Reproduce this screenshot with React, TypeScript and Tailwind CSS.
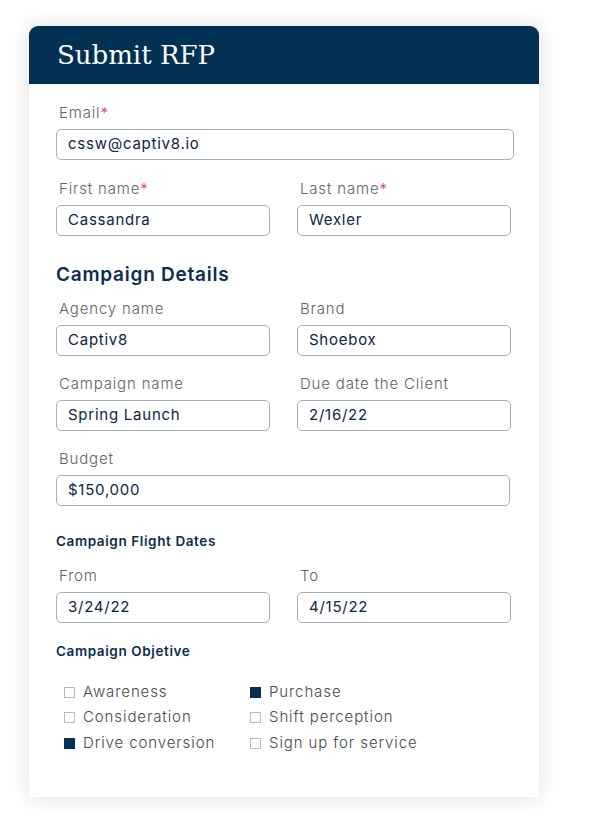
const CHECKS = [
  { label: 'Awareness', on: false },
  { label: 'Purchase', on: true },
  { label: 'Consideration', on: false },
  { label: 'Shift perception', on: false },
  { label: 'Drive conversion', on: true },
  { label: 'Sign up for service', on: false },
]

function Field({
  label,
  value,
  required,
  className = '',
}: {
  label: string
  value: string
  required?: boolean
  className?: string
}) {
  return (
    <div className={className}>
      <div className="pl-[3px] text-[15px] leading-5 font-light tracking-[0.055em] text-[#5f6366]">
        {label}
        {required && <span className="text-[#e0393e]">*</span>}
      </div>
      <div className="mt-[6px] flex h-[31px] items-center rounded-[5px] border border-[#a7afb3] px-[11px] text-[15px] tracking-[0.05em] text-[#0b2545]">
        {value}
      </div>
    </div>
  )
}

export default function App() {
  return (
    <div className="min-h-screen bg-white pt-[26px] pl-[29px] font-['Inter',sans-serif]">
      <div className="w-[510px] overflow-hidden rounded-t-[9px] rounded-b-[4px] bg-white pb-[45px] shadow-[0_0_22px_rgba(0,0,0,0.13)]">
        <div className="flex h-[58px] items-center bg-[#003153] px-[28px]">
          <h1 className="font-['DejaVu_Serif',serif] text-[26px] text-white">Submit RFP</h1>
        </div>

        <div className="px-[27px] pt-[19px]">
          <Field label="Email" value="cssw@captiv8.io" required className="w-[458px]" />

          <div className="mt-[19px] grid grid-cols-[214px_214px] gap-x-[27px]">
            <Field label="First name" value="Cassandra" required />
            <Field label="Last name" value="Wexler" required />
          </div>

          <h2 className="mt-[25px] text-[19px] font-semibold tracking-[0.04em] text-[#0b2d4f]">Campaign Details</h2>

          <div className="mt-[9px] grid grid-cols-[214px_214px] gap-x-[27px] gap-y-[18px]">
            <Field label="Agency name" value="Captiv8" />
            <Field label="Brand" value="Shoebox" />
            <Field label="Campaign name" value="Spring Launch" />
            <Field label="Due date the Client" value="2/16/22" />
          </div>

          <Field label="Budget" value="$150,000" className="mt-[18px] w-[454px]" />

          <h3 className="mt-[25px] text-[13.5px] font-semibold tracking-[0.045em] text-[#0b2d4f]">Campaign Flight Dates</h3>

          <div className="mt-[15px] grid grid-cols-[214px_214px] gap-x-[27px]">
            <Field label="From" value="3/24/22" />
            <Field label="To" value="4/15/22" />
          </div>

          <h3 className="mt-[18px] text-[13.5px] font-semibold tracking-[0.045em] text-[#0b2d4f]">Campaign Objetive</h3>

          <div className="mt-[22px] grid grid-cols-[186px_200px] gap-y-[7.5px] pl-[8px]">
            {CHECKS.map((c) => (
              <div key={c.label} className="flex h-[18px] items-center gap-[8px]">
                <span
                  className={
                    c.on
                      ? 'h-[11px] w-[11px] bg-[#003153]'
                      : 'h-[11px] w-[11px] border border-[#b5bcc0] bg-white'
                  }
                />
                <span className="text-[15px] font-light tracking-[0.06em] text-[#44494d]">{c.label}</span>
              </div>
            ))}
          </div>
        </div>
      </div>
    </div>
  )
}
